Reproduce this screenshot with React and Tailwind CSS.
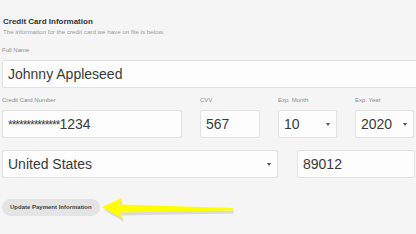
import React from "react";

const Caret = () => (
  <span className="ml-auto mr-[6px] w-0 h-0 border-l-[2.5px] border-r-[2.5px] border-t-[3px] border-l-transparent border-r-transparent border-t-[#555]" />
);

const Field = ({ label, className = "", children, select }) => (
  <div className={className}>
    {label && (
      <p className="text-[6px] leading-[8px] text-[#8a8a8a] mb-[6px] whitespace-nowrap">
        {label}
      </p>
    )}
    <div className="h-[28px] flex items-center bg-[#fdfdfd] border border-[#e2e2e2] rounded-[2px] pl-[5px] text-[14px] text-[#3a3a3a]">
      <span className="whitespace-nowrap">{children}</span>
      {select && <Caret />}
    </div>
  </div>
);

const App = () => {
  return (
    <div
      className="relative w-[416px] h-[234px] overflow-hidden bg-[#f5f5f5] pl-[2px]"
      style={{ fontFamily: '"Liberation Sans", Arial, sans-serif' }}
    >
      <header className="pt-[17px] pl-[1px]">
        <h1 className="text-[8px] leading-[9px] font-bold text-[#333]">
          Credit Card Information
        </h1>
        <p className="text-[6.2px] leading-[8px] mt-[2px] text-[#9a9a9a]">
          The information for the credit card we have on file is below.
        </p>
      </header>

      <Field label="Full Name" className="mt-[10px] w-[420px]">
        Johnny Appleseed
      </Field>

      <div className="flex gap-[18px] mt-[8px] w-[440px]">
        <Field label="Credit Card Number" className="w-[180px]">
          <span className="text-[12px] tracking-[-1px]">**************</span>1234
        </Field>
        <Field label="CVV" className="w-[60px]">
          567
        </Field>
        <Field label="Exp. Month" className="w-[59px]" select>
          10
        </Field>
        <Field label="Exp. Year" className="w-[59px]" select>
          2020
        </Field>
      </div>

      <div className="flex gap-[19px] mt-[12px]">
        <Field className="w-[276px]" select>
          United States
        </Field>
        <Field className="w-[118px]">89012</Field>
      </div>

      <button className="mt-[21px] h-[17px] px-[8px] rounded-full bg-[#e4e4e4] text-[6px] font-bold text-[#444] whitespace-nowrap">
        Update Payment Information
      </button>

      <svg
        className="absolute left-[100px] top-[196px]"
        width="140"
        height="26"
        viewBox="0 0 140 26"
      >
        <path
          d="M3 12 L22 3 L20 9 L133 13 L133 15.5 L20 17.5 L23 24 Z"
          fill="#c8c8c8"
          opacity="0.6"
          transform="translate(1 2)"
        />
        <path
          d="M2 11 L22 2 L20 8.5 L133 12 L133 14.5 L20 16.5 L23 23 Z"
          fill="#ffff00"
        />
      </svg>
    </div>
  );
};

export default App;
